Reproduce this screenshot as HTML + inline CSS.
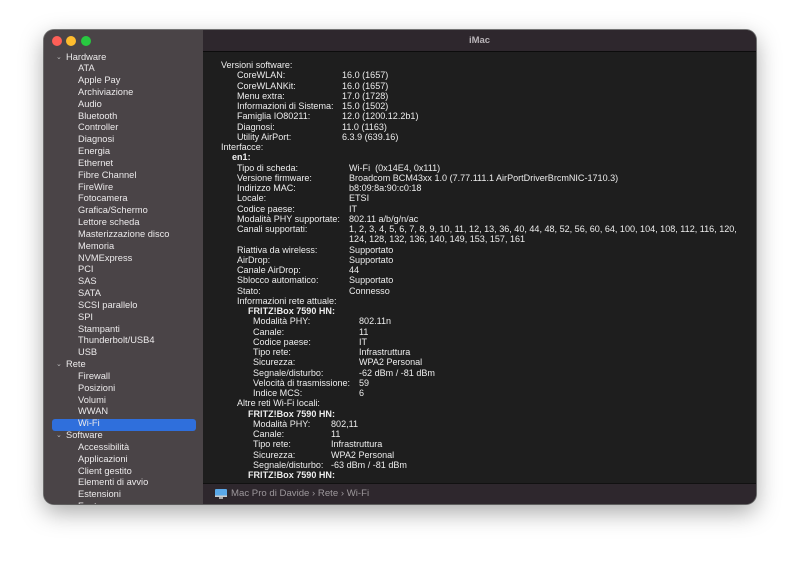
<!DOCTYPE html>
<html><head><meta charset="utf-8"><style>
*{margin:0;padding:0;box-sizing:border-box}
body{width:800px;height:563px;background:#fff;position:relative;overflow:hidden;font-family:"Liberation Sans",sans-serif;}
.win{position:absolute;left:44px;top:30px;width:712px;height:474px;border-radius:10px;overflow:hidden;background:#1e1e1e;box-shadow:0 8px 24px rgba(0,0,0,.35),0 0 0 1px rgba(0,0,0,.5);}
.side{position:absolute;left:0;top:0;width:159px;height:474px;background:#4a4447;overflow:hidden;}
.tb{position:absolute;left:159px;top:0;right:0;height:22px;background:#2e272d;border-bottom:1px solid #0c0c0c;color:#b8b3b7;font-size:9.5px;font-weight:bold;text-align:center;line-height:22px;}
.dot{position:absolute;top:6px;width:10px;height:10px;border-radius:50%}
.s{position:absolute;font-size:9.3px;color:#eceaeb;line-height:11px;white-space:nowrap}
.sel{position:absolute;left:8px;top:389px;width:144px;height:12px;background:#2f6fdc;border-radius:3px}
.c{position:absolute;font-size:9.05px;color:#ededed;line-height:10px;white-space:nowrap}
.b{font-weight:bold}
.bot{position:absolute;left:159px;right:0;top:453px;height:21px;background:#2e272d;border-top:1px solid #111;color:#9c979b;font-size:9.6px;line-height:20px;padding-left:28px}
</style></head><body>
<div class="win">
<div class="side">
<div class="dot" style="left:8px;background:#fe5f57"></div>
<div class="dot" style="left:22px;background:#febc2e"></div>
<div class="dot" style="left:37px;background:#28c840"></div>
<div class="sel"></div>
<div id="sb"></div>
</div>
<div class="tb">iMac</div>
<div id="ct"></div>
<div class="bot"><svg style="position:absolute;left:12px;top:5px" width="12" height="11" viewBox="0 0 12 11"><rect x="0" y="0" width="12" height="8" rx="1" fill="#5aa8e8"/><rect x="0" y="6.5" width="12" height="1.5" fill="#ccc"/><rect x="4" y="8" width="4" height="2" fill="#aaa"/></svg>Mac Pro di Davide › Rete › Wi-Fi</div>
</div>
<script>
var sb=[["Hardware",0],["ATA"],["Apple Pay"],["Archiviazione"],["Audio"],["Bluetooth"],["Controller"],["Diagnosi"],["Energia"],["Ethernet"],["Fibre Channel"],["FireWire"],["Fotocamera"],["Grafica/Schermo"],["Lettore scheda"],["Masterizzazione disco"],["Memoria"],["NVMExpress"],["PCI"],["SAS"],["SATA"],["SCSI parallelo"],["SPI"],["Stampanti"],["Thunderbolt/USB4"],["USB"],["Rete",0],["Firewall"],["Posizioni"],["Volumi"],["WWAN"],["Wi-Fi"],["Software",0],["Accessibilità"],["Applicazioni"],["Client gestito"],["Elementi di avvio"],["Estensioni"],["Font"]];
var h="";sb.forEach(function(e,i){var y=27+i*11.83-5.5;if(e.length>1)h+='<div class="s" style="left:12px;top:'+y+'px;font-size:7px;color:#bbb">&#8964;</div><div class="s" style="left:22px;top:'+y+'px">'+e[0]+'</div>';else h+='<div class="s" style="left:34px;top:'+y+'px">'+e[0]+'</div>';});
document.getElementById("sb").innerHTML=h;
var L=[[177,"Versioni software:"],[193,"CoreWLAN:",298,"16.0 (1657)"],[193,"CoreWLANKit:",298,"16.0 (1657)"],[193,"Menu extra:",298,"17.0 (1728)"],[193,"Informazioni di Sistema:",298,"15.0 (1502)"],[193,"Famiglia IO80211:",298,"12.0 (1200.12.2b1)"],[193,"Diagnosi:",298,"11.0 (1163)"],[193,"Utility AirPort:",298,"6.3.9 (639.16)"],[177,"Interfacce:"],[188,"<b>en1:</b>"],[193,"Tipo di scheda:",305,"Wi-Fi&nbsp; (0x14E4, 0x111)"],[193,"Versione firmware:",305,"Broadcom BCM43xx 1.0 (7.77.111.1 AirPortDriverBrcmNIC-1710.3)"],[193,"Indirizzo MAC:",305,"b8:09:8a:90:c0:18"],[193,"Locale:",305,"ETSI"],[193,"Codice paese:",305,"IT"],[193,"Modalità PHY supportate:",305,"802.11 a/b/g/n/ac"],[193,"Canali supportati:",305,"1, 2, 3, 4, 5, 6, 7, 8, 9, 10, 11, 12, 13, 36, 40, 44, 48, 52, 56, 60, 64, 100, 104, 108, 112, 116, 120,"],[0,"",305,"124, 128, 132, 136, 140, 149, 153, 157, 161"],[193,"Riattiva da wireless:",305,"Supportato"],[193,"AirDrop:",305,"Supportato"],[193,"Canale AirDrop:",305,"44"],[193,"Sblocco automatico:",305,"Supportato"],[193,"Stato:",305,"Connesso"],[193,"Informazioni rete attuale:"],[204,"<b>FRITZ!Box 7590 HN:</b>"],[209,"Modalità PHY:",315,"802.11n"],[209,"Canale:",315,"11"],[209,"Codice paese:",315,"IT"],[209,"Tipo rete:",315,"Infrastruttura"],[209,"Sicurezza:",315,"WPA2 Personal"],[209,"Segnale/disturbo:",315,"-62 dBm / -81 dBm"],[209,"Velocità di trasmissione:",315,"59"],[209,"Indice MCS:",315,"6"],[193,"Altre reti Wi-Fi locali:"],[204,"<b>FRITZ!Box 7590 HN:</b>"],[209,"Modalità PHY:",287,"802,11"],[209,"Canale:",287,"11"],[209,"Tipo rete:",287,"Infrastruttura"],[209,"Sicurezza:",287,"WPA2 Personal"],[209,"Segnale/disturbo:",287,"-63 dBm / -81 dBm"],[204,"<b>FRITZ!Box 7590 HN:</b>"]];
var c="";L.forEach(function(e,i){var y=35+i*10.25-5;if(e[1])c+='<div class="c" style="left:'+e[0]+'px;top:'+y+'px">'+e[1]+'</div>';if(e[3])c+='<div class="c" style="left:'+e[2]+'px;top:'+y+'px">'+e[3]+'</div>';});
document.getElementById("ct").innerHTML='<div style="position:absolute;left:159px;top:23px;right:0;height:430px;overflow:hidden"><div style="position:absolute;left:-159px;top:-23px">'+c+'</div></div>';
</script>
</body></html>
